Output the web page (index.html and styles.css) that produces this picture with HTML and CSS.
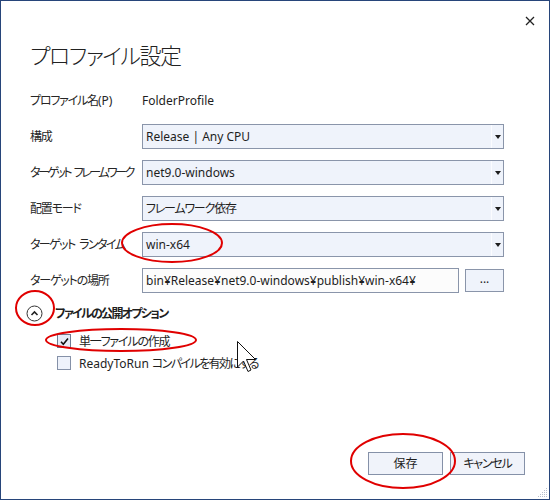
FILE: index.html
```html
<!DOCTYPE html>
<html lang="ja">
<head>
<meta charset="utf-8">
<link rel="stylesheet" href="styles.css">
</head>
<body>
<div class="window">
  <div class="titlebar">
    <svg class="close" width="10" height="10" viewBox="0 0 10 10"><path d="M1 1 L9 9 M9 1 L1 9" stroke="#222" stroke-width="1.3" fill="none"/></svg>
  </div>
  <h1 class="title">プロファイル設定</h1>
  <div class="form">
    <div class="label"><span class="ja">プロファイル名</span>(P)</div>
    <div class="value">FolderProfile</div>

    <div class="label ja">構成</div>
    <div class="combo"><span class="combo-text">Release | Any CPU</span><span class="combo-arrow"><i></i></span></div>

    <div class="label ja tight">ターゲット フレームワーク</div>
    <div class="combo"><span class="combo-text">net9.0-windows</span><span class="combo-arrow"><i></i></span></div>

    <div class="label ja">配置モード</div>
    <div class="combo"><span class="combo-text ja">フレームワーク依存</span><span class="combo-arrow"><i></i></span></div>

    <div class="label ja semi">ターゲット ランタイム</div>
    <div class="combo"><span class="combo-text">win-x64</span><span class="combo-arrow"><i></i></span></div>

    <div class="label ja">ターゲットの場所</div>
    <div class="location">
      <div class="textbox">bin¥Release¥net9.0-windows¥publish¥win-x64¥</div>
      <div class="browse">...</div>
    </div>
  </div>

  <div class="section">
    <svg class="expander" width="17" height="17" viewBox="0 0 17 17"><circle cx="8.5" cy="8.5" r="7.5" fill="#fff" stroke="#333" stroke-width="1"/><path d="M5.5 10 L8.5 7 L11.5 10" stroke="#222" stroke-width="1.6" fill="none"/></svg>
    <span class="section-title">ファイルの公開オプション</span>
  </div>
  <div class="options">
    <div class="check-row">
      <span class="checkbox checked"><svg width="11" height="11" viewBox="0 0 11 11"><path d="M2 5.8 L4.3 8.2 L9 2.5" stroke="#111" stroke-width="1.6" fill="none"/></svg></span>
      <span class="check-label ja">単一ファイルの作成</span>
    </div>
    <div class="check-row">
      <span class="checkbox"></span>
      <span class="check-label">ReadyToRun <span class="ja semi">コンパイルを有効にする</span></span>
    </div>
  </div>

  <div class="footer">
    <div class="btn">保存</div>
    <div class="btn ja">キャンセル</div>
  </div>

  <svg class="grip" width="10" height="10" viewBox="0 0 10 10">
    <g fill="#b8bfcc">
      <rect x="8" y="0" width="1" height="1"/>
      <rect x="6" y="2" width="1" height="1"/><rect x="8" y="2" width="1" height="1"/>
      <rect x="4" y="4" width="1" height="1"/><rect x="6" y="4" width="1" height="1"/><rect x="8" y="4" width="1" height="1"/>
      <rect x="2" y="6" width="1" height="1"/><rect x="4" y="6" width="1" height="1"/><rect x="6" y="6" width="1" height="1"/><rect x="8" y="6" width="1" height="1"/>
      <rect x="0" y="8" width="1" height="1"/><rect x="2" y="8" width="1" height="1"/><rect x="4" y="8" width="1" height="1"/><rect x="6" y="8" width="1" height="1"/><rect x="8" y="8" width="1" height="1"/>
    </g>
  </svg>

  <svg class="annotations" width="550" height="500" viewBox="0 0 550 500">
    <g fill="none" stroke="#e00000" stroke-width="2">
      <ellipse cx="172" cy="243" rx="50" ry="19"/>
      <ellipse cx="35" cy="308" rx="19" ry="17"/>
      <ellipse cx="121" cy="340" rx="75" ry="11"/>
      <ellipse cx="403" cy="461" rx="52" ry="27"/>
    </g>
    <path d="M237.5 341.5 L237.5 367 L243.5 361 L248 371.5 L251 370 L246.5 359.5 L255.5 359.5 Z" fill="#fff" stroke="#111" stroke-width="1" stroke-linejoin="miter"/>
  </svg>
</div>
</body>
</html>
```

FILE: styles.css
```css
* { box-sizing: border-box; }
html, body { margin: 0; padding: 0; background: #fff; }
body {
  font-family: "Noto Sans", "Noto Sans CJK JP", sans-serif;
  font-size: 12px;
  color: #1e1e1e;
  font-feature-settings: "palt" 1;
}
.ja { letter-spacing: -1.2px; }
.ja.semi { letter-spacing: -1.6px; word-spacing: 3px; }
.ja.tight { letter-spacing: -2.5px; word-spacing: 3px; }
.window {
  position: relative;
  width: 550px;
  height: 500px;
  border: 1px solid #27457a;
  background: #fff;
  display: flex;
  flex-direction: column;
  overflow: hidden;
}
.titlebar {
  height: 39px;
  display: flex;
  justify-content: flex-end;
  align-items: center;
  padding-right: 14px;
}
.close { display: block; }
.title {
  margin: 0 0 0 29px;
  height: 30px;
  line-height: 30px;
  font-size: 22px;
  font-weight: 300;
  color: #222;
  letter-spacing: -1.4px;
}
.form {
  margin: 18px 0 0 29px;
  display: grid;
  grid-template-columns: 112px 362px;
  grid-auto-rows: 25px;
  row-gap: 11px;
  align-items: center;
}
.label, .value { line-height: 25px; white-space: nowrap; }
.label { color: #262626; }
.combo {
  height: 25px;
  border: 1px solid #8a95aa;
  background: #eff3fb;
  display: flex;
  align-items: stretch;
}
.combo-text { flex: 1; padding-left: 3px; line-height: 23px; white-space: nowrap; }
.combo-arrow {
  width: 12px;
  border-left: 1px solid #fbfcff;
  display: flex;
  align-items: center;
  justify-content: center;
}
.combo-arrow i {
  display: block;
  width: 0; height: 0;
  border-left: 3.5px solid transparent;
  border-right: 3.5px solid transparent;
  border-top: 4px solid #1e1e1e;
  margin-left: 1px;
}
.location { display: flex; align-items: center; gap: 6px; height: 25px; }
.textbox {
  width: 317px;
  height: 25px;
  border: 1px solid #8a95aa;
  background: #fcfcfc;
  padding-left: 3px;
  line-height: 23px;
  white-space: nowrap;
  overflow: hidden;
}
.browse {
  width: 39px;
  height: 23px;
  border: 1px solid #8a95aa;
  background: #eff3fb;
  text-align: center;
  line-height: 17px;
  font-size: 12px;
}
.section {
  margin: 10px 0 0 25px;
  height: 20px;
  display: flex;
  align-items: center;
  gap: 12px;
}
.expander { display: block; }
.section-title { font-weight: bold; letter-spacing: -1.7px; }
.options { margin: 7px 0 0 56px; display: flex; flex-direction: column; }
.check-row { height: 22px; display: flex; align-items: center; gap: 8px; }
.check-label { white-space: nowrap; }
.checkbox {
  width: 14px; height: 14px;
  border: 1px solid #8591a8;
  background: #eef2fb;
  display: flex; align-items: center; justify-content: center;
}
.checkbox.checked { background: #e6ecf7; border-color: #6e7a92; }
.checkbox svg { display: block; }
.footer {
  margin-top: auto;
  margin-bottom: 24px;
  padding-right: 24px;
  display: flex;
  justify-content: flex-end;
  gap: 7px;
}
.btn {
  width: 75px;
  height: 23px;
  border: 1px solid #8591a8;
  background: #f0f3fa;
  text-align: center;
  line-height: 21px;
}
.grip { position: absolute; right: 1px; bottom: 1px; }
.annotations { position: absolute; left: -1px; top: -1px; pointer-events: none; }
```
